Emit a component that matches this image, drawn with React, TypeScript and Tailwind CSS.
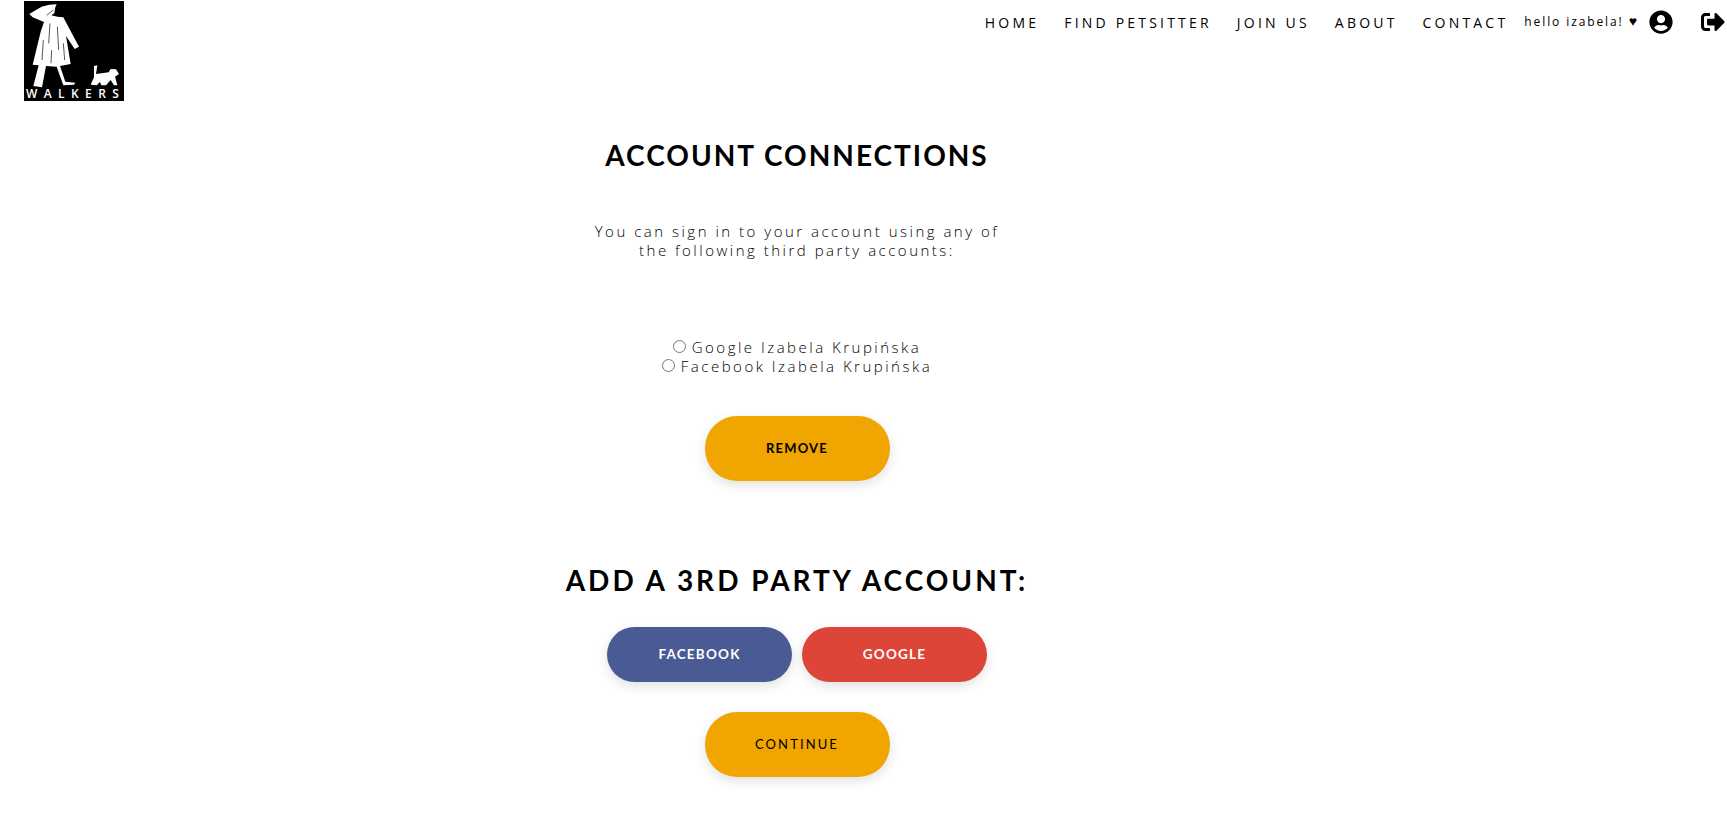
import React from "react";
import { FaSignOutAlt, FaUserCircle } from "react-icons/fa";

function Logo() {
  return (
    <div className="relative w-[100px] h-[100px] bg-black">
      <svg viewBox="72 3 300 300" className="w-[100px] h-[100px] block">
        <g fill="#fff">
          {/* woman */}
          <path d="M88 42 L108 30 L125 20 L148 14 L170 13 L166 22 L163 40 L154 46 L172 50 L190 52 L205 80 L237 140 L224 147 L198 108 L212 192 L180 198 L196 245 L226 248 L222 254 L190 256 L170 200 L138 198 L126 262 L100 258 L116 196 L98 194 L122 95 L132 66 L98 52 Z" />
          {/* dog */}
          <path d="M282 198 L292 196 L288 222 L326 217 L332 207 L348 208 L357 222 L345 230 L352 256 L342 256 L332 240 L318 256 L304 256 L300 246 L290 256 L272 254 L282 232 Z" />
        </g>
        {/* scratchy lines on the dress */}
        <g stroke="#000" strokeWidth="2" fill="none">
          <path d="M150 70 L146 130" />
          <path d="M172 80 L176 150" />
          <path d="M130 120 L126 180" />
          <path d="M155 150 L153 190" />
          <path d="M190 130 L194 180" />
          <path d="M140 46 L160 30" />
        </g>
      </svg>
      <span className="absolute left-[2px] bottom-[1px] text-white text-[12px] leading-[13px] font-semibold tracking-[6.4px] whitespace-nowrap font-['Open_Sans',sans-serif]">
        WALKERS
      </span>
    </div>
  );
}

function NavBar() {
  return (
    <header className="flex justify-between h-[101px] pt-px pl-6">
      <Logo />
      <nav className="flex items-start font-['Open_Sans',sans-serif] text-black">
        <div className="flex gap-[25px] text-[14px] tracking-[3.2px] leading-[19px] pt-[12px]">
          <a>HOME</a>
          <a>FIND PETSITTER</a>
          <a>JOIN US</a>
          <a>ABOUT</a>
          <a>CONTACT</a>
        </div>
        <span className="ml-[16px] text-[12px] tracking-[1.9px] leading-[16px] pt-[13px]">hello izabela!</span>
        <span className="ml-[5px] text-[14px] leading-[15px] pt-[12px]">♥</span>
        <FaUserCircle className="ml-[12px] mt-[9px] w-[24px] h-[24px]" />
        <FaSignOutAlt className="ml-[26px] mt-[9px] w-[28px] h-[24px]" />
      </nav>
    </header>
  );
}

function Button({ label, className }: { label: string; className: string }) {
  return (
    <button
      className={
        "w-[185px] rounded-[32px] shadow-[0_4px_12px_rgba(0,0,0,0.12)] font-['Lato',sans-serif] " +
        className
      }
    >
      {label}
    </button>
  );
}

export default function App() {
  return (
    <div className="bg-white min-h-[825px] overflow-hidden">
      <NavBar />
      <main className="w-[1594px] flex flex-col items-center text-black font-['Open_Sans',sans-serif]">
        <h1 className="mt-[35px] text-[28px] leading-[38px] font-bold tracking-[2px] font-['Lato',sans-serif]">ACCOUNT CONNECTIONS</h1>
        <p className="mt-[48px] w-[415px] text-center text-[15px] font-light tracking-[2.5px] leading-[19px]">
          You can sign in to your account using any of the following third party accounts:
        </p>
        <div className="mt-[78px] flex flex-col items-center text-[15px] font-light tracking-[2.5px] leading-[19px]">
          <label>
            <input type="radio" name="account" className="mr-[6px]" />
            Google Izabela Krupińska
          </label>
          <label>
            <input type="radio" name="account" className="mr-[6px]" />
            Facebook Izabela Krupińska
          </label>
        </div>
        <Button label="REMOVE" className="mt-[40px] h-[65px] bg-[#f0a500] text-[13px] font-bold tracking-[1.2px]" />
        <h2 className="mt-[80px] text-[28px] leading-[38px] font-bold tracking-[3px] font-['Lato',sans-serif]">ADD A 3RD PARTY ACCOUNT:</h2>
        <div className="mt-[28px] flex gap-[10px]">
          <Button label="FACEBOOK" className="h-[55px] bg-[#4a5a94] text-white text-[13.5px] font-bold tracking-[1.2px]" />
          <Button label="GOOGLE" className="h-[55px] bg-[#dd4539] text-white text-[13.5px] font-bold tracking-[1.2px]" />
        </div>
        <Button label="CONTINUE" className="mt-[30px] h-[65px] bg-[#f0a500] text-[13px] tracking-[2.1px]" />
      </main>
    </div>
  );
}
